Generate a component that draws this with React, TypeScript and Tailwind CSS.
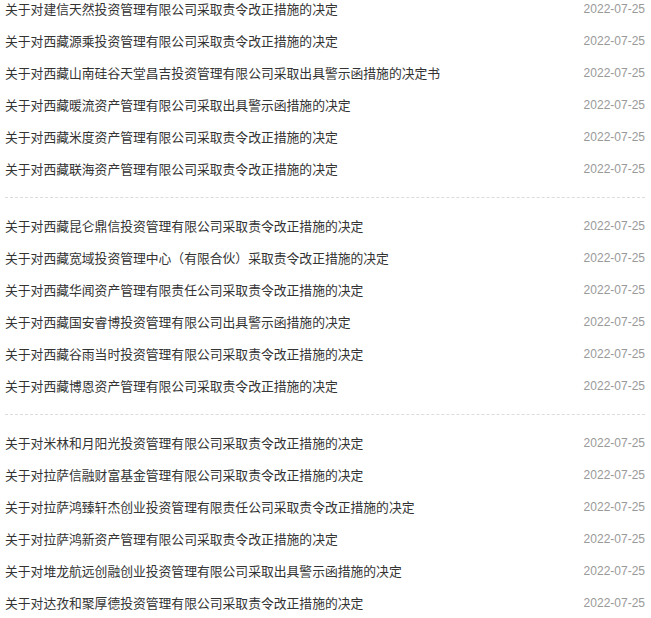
import React from "react";

interface Item {
  title: string;
  date: string;
}

const groups: Item[][] = [
  [
    { title: "关于对建信天然投资管理有限公司采取责令改正措施的决定", date: "2022-07-25" },
    { title: "关于对西藏源乘投资管理有限公司采取责令改正措施的决定", date: "2022-07-25" },
    { title: "关于对西藏山南硅谷天堂昌吉投资管理有限公司采取出具警示函措施的决定书", date: "2022-07-25" },
    { title: "关于对西藏暖流资产管理有限公司采取出具警示函措施的决定", date: "2022-07-25" },
    { title: "关于对西藏米度资产管理有限公司采取责令改正措施的决定", date: "2022-07-25" },
    { title: "关于对西藏联海资产管理有限公司采取责令改正措施的决定", date: "2022-07-25" },
  ],
  [
    { title: "关于对西藏昆仑鼎信投资管理有限公司采取责令改正措施的决定", date: "2022-07-25" },
    { title: "关于对西藏宽域投资管理中心（有限合伙）采取责令改正措施的决定", date: "2022-07-25" },
    { title: "关于对西藏华闻资产管理有限责任公司采取责令改正措施的决定", date: "2022-07-25" },
    { title: "关于对西藏国安睿博投资管理有限公司出具警示函措施的决定", date: "2022-07-25" },
    { title: "关于对西藏谷雨当时投资管理有限公司采取责令改正措施的决定", date: "2022-07-25" },
    { title: "关于对西藏博恩资产管理有限公司采取责令改正措施的决定", date: "2022-07-25" },
  ],
  [
    { title: "关于对米林和月阳光投资管理有限公司采取责令改正措施的决定", date: "2022-07-25" },
    { title: "关于对拉萨信融财富基金管理有限公司采取责令改正措施的决定", date: "2022-07-25" },
    { title: "关于对拉萨鸿臻轩杰创业投资管理有限责任公司采取责令改正措施的决定", date: "2022-07-25" },
    { title: "关于对拉萨鸿新资产管理有限公司采取责令改正措施的决定", date: "2022-07-25" },
    { title: "关于对堆龙航远创融创业投资管理有限公司采取出具警示函措施的决定", date: "2022-07-25" },
    { title: "关于对达孜和聚厚德投资管理有限公司采取责令改正措施的决定", date: "2022-07-25" },
  ],
];

const NoticeList = () => {
  return (
    <div className="w-[651px] h-[618px] overflow-hidden bg-white">
      <div className="-mt-[7px] pl-[5px] pr-[6px]">
        {groups.map((group, gi) => (
          <div key={gi}>
            {gi > 0 && <div className="my-[12px] border-t border-dashed border-[#dcdcdc]" />}
            <ul>
              {group.map((item, i) => (
                <li key={i} className="flex h-[32px] items-center justify-between">
                  <span className="text-[12.8px] text-[#333333] font-['Noto_Sans_CJK_SC',sans-serif]">
                    {item.title}
                  </span>
                  <span className="text-[12px] text-[#999999] font-['Liberation_Sans',sans-serif]">
                    {item.date}
                  </span>
                </li>
              ))}
            </ul>
          </div>
        ))}
      </div>
    </div>
  );
};

export default NoticeList;
